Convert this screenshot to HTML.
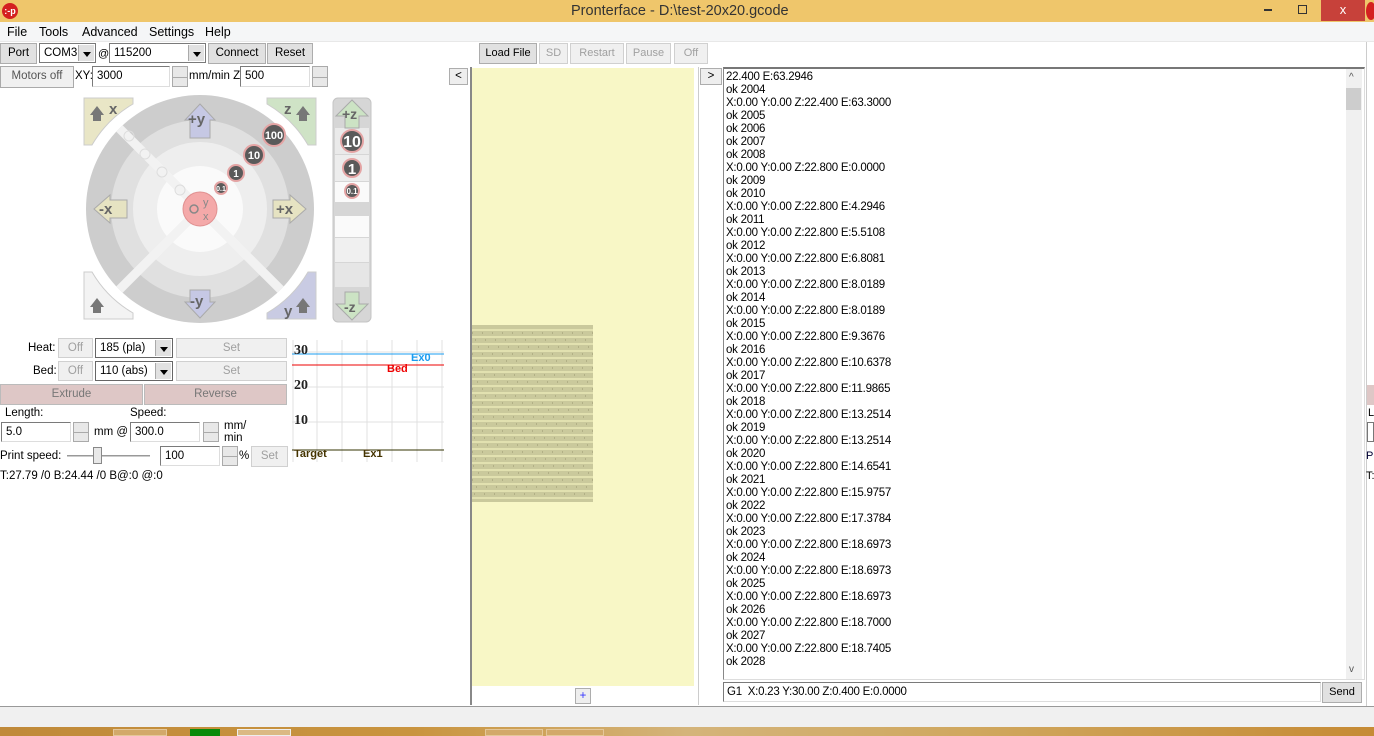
<!DOCTYPE html>
<html><head><meta charset="utf-8">
<style>
*{box-sizing:border-box;margin:0;padding:0}
body{width:1374px;height:736px;overflow:hidden;background:#fff;font-family:"Liberation Sans",sans-serif;font-size:12px;color:#000;position:relative}
.a{position:absolute}
.btn{position:absolute;background:#e1e1e1;border:1px solid #adadad;text-align:center;font-size:11.5px;color:#000;line-height:19px}
.dis{color:#a0a0a0;background:#f0f0f0;border-color:#d0d0d0}
.inp{position:absolute;background:#fff;border:1px solid #7a7a7a;border-right-color:#ddd;border-bottom-color:#ddd;font-size:11.5px;padding-left:4px;line-height:18px}
.spin{position:absolute;width:16px;background:#e8e8e8;border:1px solid #aaa}
.spin:after{content:"";position:absolute;left:0;right:0;top:50%;border-top:1px solid #aaa}
.dd{position:absolute;right:1px;top:1px;bottom:1px;width:16px;background:#e1e1e1;border-left:1px solid #aaa}
.dd:after{content:"";position:absolute;left:4px;top:7px;border:4px solid transparent;border-top:5px solid #000}
.con div{height:13px;line-height:13px;white-space:nowrap}
</style></head><body>
<div class="a" style="left:0;top:0;width:1374px;height:22px;background:#efc66b"></div>
<div class="a" style="left:2px;top:3px;width:16px;height:16px;border-radius:50%;background:#d42020;color:#fff;font-size:9px;line-height:16px;text-align:center;font-weight:bold">:-p</div>
<div class="a" style="left:571px;top:3px;font-size:14.5px;color:#333">Pronterface - D:\test-20x20.gcode</div>
<div class="a" style="left:1264px;top:9px;width:8px;height:2px;background:#333"></div>
<div class="a" style="left:1298px;top:5px;width:9px;height:9px;border:1.5px solid #333"></div>
<div class="a" style="left:1321px;top:0;width:44px;height:21px;background:#c7413a;color:#fff;text-align:center;font-size:13px;line-height:20px">x</div>
<div class="a" style="left:1366px;top:2px;width:10px;height:18px;border-radius:50%;background:#d42020"></div>
<div class="a" style="left:0;top:22px;width:1374px;height:20px;background:#f5f6f7;border-bottom:1px solid #e8e8e8"></div>
<div class="a" style="left:7px;top:25px;font-size:12.5px">File</div>
<div class="a" style="left:39px;top:25px;font-size:12.5px">Tools</div>
<div class="a" style="left:82px;top:25px;font-size:12.5px">Advanced</div>
<div class="a" style="left:149px;top:25px;font-size:12.5px">Settings</div>
<div class="a" style="left:205px;top:25px;font-size:12.5px">Help</div>
<div class="btn" style="left:0;top:43px;width:37px;height:21px">Port</div>
<div class="inp" style="left:39px;top:43px;width:57px;height:20px;border:1px solid #7a7a7a">COM3<div class="dd"></div></div>
<div class="a" style="left:98px;top:48px;font-size:11px">@</div>
<div class="inp" style="left:109px;top:43px;width:97px;height:20px;border:1px solid #7a7a7a">115200<div class="dd"></div></div>
<div class="btn" style="left:208px;top:43px;width:58px;height:21px">Connect</div>
<div class="btn" style="left:267px;top:43px;width:46px;height:21px">Reset</div>
<div class="btn dis" style="left:0;top:66px;width:74px;height:22px;color:#555;border-color:#aaa">Motors off</div>
<div class="a" style="left:75px;top:70px;font-size:11.5px">XY:</div>
<div class="inp" style="left:92px;top:66px;width:78px;height:21px">3000</div>
<div class="spin" style="left:172px;top:66px;height:21px"></div>
<div class="a" style="left:189px;top:70px;font-size:11.5px">mm/min Z:</div>
<div class="inp" style="left:240px;top:66px;width:70px;height:21px">500</div>
<div class="spin" style="left:312px;top:66px;height:21px"></div>
<svg class="a" style="left:0;top:0" width="460" height="330" viewBox="0 0 460 330">
<defs><clipPath id="cl"><circle cx="200" cy="209" r="114"/></clipPath></defs>
<path d="M84 98 H133 L133 104 A114 114 0 0 0 92 145 H84Z" fill="#e9e6c6" stroke="#ccc"/>
<path d="M316 98 H267 V104 A114 114 0 0 1 308 145 H316Z" fill="#cfe3c6" stroke="#ccc"/>
<path d="M84 319 H133 V313 A114 114 0 0 1 92 272 H84Z" fill="#f3f3f3" stroke="#ccc"/>
<path d="M316 319 H267 V313 A114 114 0 0 0 308 272 H316Z" fill="#c9cbe3" stroke="#ccc"/>
<circle cx="200" cy="209" r="114" fill="#cdcdcd"/>
<circle cx="200" cy="209" r="89" fill="#e0e0e0"/>
<circle cx="200" cy="209" r="67" fill="#eeeeee"/>
<circle cx="200" cy="209" r="43" fill="#fafafa"/>
<g clip-path="url(#cl)" stroke="#f2f2f2" stroke-width="9"><line x1="110" y1="119" x2="290" y2="299"/><line x1="110" y1="299" x2="200" y2="209"/></g>
<g fill="none" stroke="#ddd"><circle cx="129" cy="136" r="5"/><circle cx="145" cy="154" r="5"/><circle cx="162" cy="172" r="5"/><circle cx="180" cy="190" r="5"/></g>
<path d="M190 138 V120 H185 L200 104 L215 120 H210 V138Z" fill="#c6c8e4" stroke="#aaa"/>
<path d="M190 290 V302 H185 L200 318 L215 302 H210 V290Z" fill="#c6c8e4" stroke="#aaa"/>
<path d="M127 200 H110 V195 L94 209 L110 223 V218 H127Z" fill="#e6e3c2" stroke="#aaa"/>
<path d="M273 200 H290 V195 L306 209 L290 223 V218 H273Z" fill="#e6e3c2" stroke="#aaa"/>
<g font-family="Liberation Sans" font-weight="bold" fill="#666" font-size="15">
<text x="188" y="124">+y</text><text x="190" y="306">-y</text><text x="99" y="214">-x</text><text x="276" y="214">+x</text>
<text x="109" y="114">x</text><text x="284" y="114">z</text><text x="284" y="316">y</text></g>
<g fill="#777"><path d="M90 115 L97 106 L104 115 H101 V121 H93 V115Z"/><path d="M296 115 L303 106 L310 115 H307 V121 H299 V115Z"/><path d="M90 307 L97 298 L104 307 H101 V313 H93 V307Z"/><path d="M296 307 L303 298 L310 307 H307 V313 H299 V307Z"/></g>
<g stroke="#e4a4a4" stroke-width="2" fill="#5a5a5a"><circle cx="274" cy="135" r="11"/><circle cx="254" cy="155" r="10"/><circle cx="236" cy="173" r="8"/><circle cx="221" cy="188" r="6"/></g>
<g fill="#fff" font-weight="bold" font-family="Liberation Sans" text-anchor="middle"><text x="274" y="139" font-size="11">100</text><text x="254" y="159" font-size="11">10</text><text x="236" y="177" font-size="10">1</text><text x="221" y="191" font-size="7">0.1</text></g>
<circle cx="200" cy="209" r="17" fill="#f4a9a9" stroke="#e09090"/>
<circle cx="194" cy="209" r="4" fill="none" stroke="#888" stroke-width="1.5"/>
<text x="203" y="206" font-size="11" fill="#888" font-family="Liberation Sans">y</text><text x="203" y="220" font-size="11" fill="#888" font-family="Liberation Sans">x</text>
<rect x="333" y="98" width="38" height="224" rx="5" fill="#d6d6d6" stroke="#c4c4c4"/>
<rect x="335" y="128" width="34" height="26" fill="#eaeaea"/><rect x="335" y="155" width="34" height="26" fill="#ededed"/><rect x="335" y="182" width="34" height="20" fill="#fafafa"/>
<rect x="335" y="216" width="34" height="21" fill="#fafafa"/><rect x="335" y="238" width="34" height="24" fill="#f0f0f0"/><rect x="335" y="263" width="34" height="24" fill="#e6e6e6"/>
<path d="M345 128 V116 H336 L352 100 L368 116 H359 V128Z" fill="#cce3c4" stroke="#aaa"/>
<path d="M345 292 V304 H336 L352 320 L368 304 H359 V292Z" fill="#cce3c4" stroke="#aaa"/>
<g font-family="Liberation Sans" font-weight="bold" fill="#666" font-size="14"><text x="342" y="119">+z</text><text x="344" y="312">-z</text></g>
<g stroke="#e4a4a4" stroke-width="2" fill="#5a5a5a"><circle cx="352" cy="141" r="11"/><circle cx="352" cy="168" r="9"/><circle cx="352" cy="191" r="7"/></g>
<g fill="#fff" font-weight="bold" font-family="Liberation Sans" text-anchor="middle"><text x="352" y="147" font-size="16">10</text><text x="352" y="174" font-size="15">1</text><text x="352" y="194" font-size="8">0.1</text></g>
</svg>
<div class="a" style="left:28px;top:342px;font-size:11.5px">Heat:</div>
<div class="btn dis" style="left:58px;top:338px;width:35px;height:20px">Off</div>
<div class="inp" style="left:95px;top:338px;width:78px;height:20px;border:1px solid #666">185 (pla)<div class="dd"></div></div>
<div class="btn dis" style="left:176px;top:338px;width:111px;height:20px">Set</div>
<div class="a" style="left:33px;top:365px;font-size:11.5px">Bed:</div>
<div class="btn dis" style="left:58px;top:361px;width:35px;height:20px">Off</div>
<div class="inp" style="left:95px;top:361px;width:78px;height:20px;border:1px solid #666">110 (abs)<div class="dd"></div></div>
<div class="btn dis" style="left:176px;top:361px;width:111px;height:20px">Set</div>
<div class="btn" style="left:0;top:384px;width:143px;height:21px;background:#dec7c6;color:#777;border-color:#bbb">Extrude</div>
<div class="btn" style="left:144px;top:384px;width:143px;height:21px;background:#dec7c6;color:#777;border-color:#bbb">Reverse</div>
<div class="a" style="left:5px;top:407px;font-size:11.5px">Length:</div>
<div class="a" style="left:130px;top:407px;font-size:11.5px">Speed:</div>
<div class="inp" style="left:1px;top:422px;width:70px;height:20px">5.0</div>
<div class="spin" style="left:73px;top:422px;height:20px"></div>
<div class="a" style="left:94px;top:426px;font-size:11.5px">mm @</div>
<div class="inp" style="left:130px;top:422px;width:70px;height:20px">300.0</div>
<div class="spin" style="left:203px;top:422px;height:20px"></div>
<div class="a" style="left:224px;top:420px;font-size:11.5px;line-height:12px">mm/<br>min</div>
<div class="a" style="left:0;top:450px;font-size:11.5px">Print speed:</div>
<div class="a" style="left:67px;top:455px;width:83px;height:2px;background:#ccc;border-top:1px solid #999"></div>
<div class="a" style="left:93px;top:447px;width:9px;height:17px;background:#e8e8e8;border:1px solid #888"></div>
<div class="inp" style="left:160px;top:446px;width:60px;height:20px">100</div>
<div class="spin" style="left:222px;top:446px;height:20px"></div>
<div class="a" style="left:239px;top:450px;font-size:11.5px">%</div>
<div class="btn dis" style="left:251px;top:446px;width:37px;height:21px">Set</div>
<div class="a" style="left:0;top:470px;font-size:11.5px">T:27.79 /0 B:24.44 /0 B@:0 @:0</div>
<svg class="a" style="left:292px;top:340px" width="152" height="122">
<g stroke="#e0e0e0"><line x1="1" y1="0" x2="1" y2="122"/><line x1="25" y1="0" x2="25" y2="122"/><line x1="50" y1="0" x2="50" y2="122"/><line x1="75" y1="0" x2="75" y2="122"/><line x1="100" y1="0" x2="100" y2="122"/><line x1="125" y1="0" x2="125" y2="122"/><line x1="150" y1="0" x2="150" y2="122"/>
<line x1="0" y1="12" x2="152" y2="12"/><line x1="0" y1="47" x2="152" y2="47"/><line x1="0" y1="82" x2="152" y2="82"/></g>
<line x1="0" y1="14" x2="152" y2="14" stroke="#1a9cf0"/><line x1="0" y1="25" x2="152" y2="25" stroke="#e00"/><line x1="0" y1="110" x2="152" y2="110" stroke="#333300"/>
<g font-family="Liberation Serif" font-weight="bold" font-size="14" fill="#222"><text x="2" y="14">30</text><text x="2" y="49">20</text><text x="2" y="84">10</text></g>
<g font-family="Liberation Sans" font-weight="bold" font-size="11"><text x="119" y="21" fill="#1a9cf0">Ex0</text><text x="95" y="32" fill="#e00">Bed</text><text x="2" y="117" fill="#443300">Target</text><text x="71" y="117" fill="#443300">Ex1</text></g>
</svg>
<div class="btn" style="left:479px;top:43px;width:58px;height:21px;font-size:11px">Load File</div>
<div class="btn dis" style="left:539px;top:43px;width:29px;height:21px;font-size:11px">SD</div>
<div class="btn dis" style="left:570px;top:43px;width:54px;height:21px;font-size:11px">Restart</div>
<div class="btn dis" style="left:626px;top:43px;width:45px;height:21px;font-size:11px">Pause</div>
<div class="btn dis" style="left:674px;top:43px;width:34px;height:21px;font-size:11px">Off</div>
<div class="btn" style="left:449px;top:68px;width:19px;height:17px;line-height:14px;background:#eee">&lt;</div>
<div class="a" style="left:470px;top:67px;width:229px;height:638px;border-left:2px solid #888;border-right:1px solid #ccc"></div>
<div class="a" style="left:472px;top:68px;width:222px;height:618px;background:#f8f7c6"></div>
<svg class="a" style="left:472px;top:325px" width="121" height="177">
<rect width="121" height="177" fill="#cac99c"/>
<g stroke="#e2e1b0" stroke-width="2"><path d="M0 5H121M0 12H121M0 19H121M0 26H121M0 33H121M0 40H121M0 47H121M0 54H121M0 61H121M0 68H121M0 75H121M0 82H121M0 89H121M0 96H121M0 103H121M0 110H121M0 117H121M0 124H121M0 131H121M0 138H121M0 145H121M0 152H121M0 159H121M0 166H121M0 173H121"/></g>
<g stroke="#999870" stroke-width="1" stroke-dasharray="1 9"><path d="M0 8H121M3 15H121M6 22H121M0 29H121M4 36H121M0 43H121M2 50H121M5 57H121M0 64H121M3 71H121M0 78H121M6 85H121M1 92H121M4 99H121M0 106H121M2 113H121M5 120H121M0 127H121M3 134H121M1 141H121M6 148H121M0 155H121M4 162H121M2 169H121"/></g>
</svg>
<div class="btn" style="left:575px;top:688px;width:16px;height:16px;line-height:14px;color:#33f;background:#eee">+</div>
<div class="btn" style="left:700px;top:68px;width:22px;height:17px;line-height:14px;background:#eee">&gt;</div>
<div class="a" style="left:723px;top:67px;width:642px;height:613px;border:1px solid #888;border-top:2px solid #777;border-right-color:#ddd;border-bottom-color:#ddd"></div>
<div class="a" style="left:1346px;top:69px;width:16px;height:610px;background:#f0f0f0"></div>
<div class="a" style="left:1346px;top:88px;width:15px;height:22px;background:#cdcdcd"></div>
<div class="a" style="left:1349px;top:72px;font-size:10px;color:#555">^</div>
<div class="a" style="left:1349px;top:664px;font-size:10px;color:#555">v</div>
<div class="a con" style="left:726px;top:71px;font-size:11.5px;letter-spacing:-0.25px">
<div>22.400 E:63.2946</div><div>ok 2004</div><div>X:0.00 Y:0.00 Z:22.400 E:63.3000</div><div>ok 2005</div><div>ok 2006</div><div>ok 2007</div><div>ok 2008</div><div>X:0.00 Y:0.00 Z:22.800 E:0.0000</div><div>ok 2009</div><div>ok 2010</div><div>X:0.00 Y:0.00 Z:22.800 E:4.2946</div><div>ok 2011</div><div>X:0.00 Y:0.00 Z:22.800 E:5.5108</div><div>ok 2012</div><div>X:0.00 Y:0.00 Z:22.800 E:6.8081</div><div>ok 2013</div><div>X:0.00 Y:0.00 Z:22.800 E:8.0189</div><div>ok 2014</div><div>X:0.00 Y:0.00 Z:22.800 E:8.0189</div><div>ok 2015</div><div>X:0.00 Y:0.00 Z:22.800 E:9.3676</div><div>ok 2016</div><div>X:0.00 Y:0.00 Z:22.800 E:10.6378</div><div>ok 2017</div><div>X:0.00 Y:0.00 Z:22.800 E:11.9865</div><div>ok 2018</div><div>X:0.00 Y:0.00 Z:22.800 E:13.2514</div><div>ok 2019</div><div>X:0.00 Y:0.00 Z:22.800 E:13.2514</div><div>ok 2020</div><div>X:0.00 Y:0.00 Z:22.800 E:14.6541</div><div>ok 2021</div><div>X:0.00 Y:0.00 Z:22.800 E:15.9757</div><div>ok 2022</div><div>X:0.00 Y:0.00 Z:22.800 E:17.3784</div><div>ok 2023</div><div>X:0.00 Y:0.00 Z:22.800 E:18.6973</div><div>ok 2024</div><div>X:0.00 Y:0.00 Z:22.800 E:18.6973</div><div>ok 2025</div><div>X:0.00 Y:0.00 Z:22.800 E:18.6973</div><div>ok 2026</div><div>X:0.00 Y:0.00 Z:22.800 E:18.7000</div><div>ok 2027</div><div>X:0.00 Y:0.00 Z:22.800 E:18.7405</div><div>ok 2028</div>
</div>
<div class="inp" style="left:723px;top:682px;width:598px;height:20px;font-size:11.5px;letter-spacing:-0.25px;padding-left:3px">G1 &nbsp;X:0.23 Y:30.00 Z:0.400 E:0.0000</div>
<div class="btn" style="left:1322px;top:682px;width:40px;height:21px;font-size:11px">Send</div>
<div class="a" style="left:1366px;top:42px;width:8px;height:666px;border-left:1px solid #ccc"></div>
<div class="a" style="left:1367px;top:385px;width:7px;height:20px;background:#dec7c6"></div>
<div class="a" style="left:1368px;top:407px;font-size:11px">L</div>
<div class="a" style="left:1367px;top:422px;width:7px;height:20px;border:1px solid #777"></div>
<div class="a" style="left:1366px;top:450px;font-size:11px;color:#003">Pr</div>
<div class="a" style="left:1366px;top:470px;font-size:11px">T:</div>
<div class="a" style="left:0;top:706px;width:1374px;height:21px;background:#f0f0f0;border-top:1px solid #999"></div>
<div class="a" style="left:0;top:727px;width:1374px;height:9px;background:linear-gradient(90deg,#c08a3a,#c9943f 30%,#d4b47a 50%,#d0a860 70%,#c68b35)"></div>
<div class="a" style="left:113px;top:729px;width:54px;height:7px;background:#d2a96a;border:1px solid #e4c79a"></div>
<div class="a" style="left:190px;top:729px;width:30px;height:7px;background:#0a8a0a"></div>
<div class="a" style="left:237px;top:729px;width:54px;height:7px;background:#dbb983;border:1px solid #eee"></div>
<div class="a" style="left:485px;top:729px;width:58px;height:7px;background:#d2a96a;border:1px solid #e4c79a"></div>
<div class="a" style="left:546px;top:729px;width:58px;height:7px;background:#d2a96a;border:1px solid #e4c79a"></div>
</body></html>
